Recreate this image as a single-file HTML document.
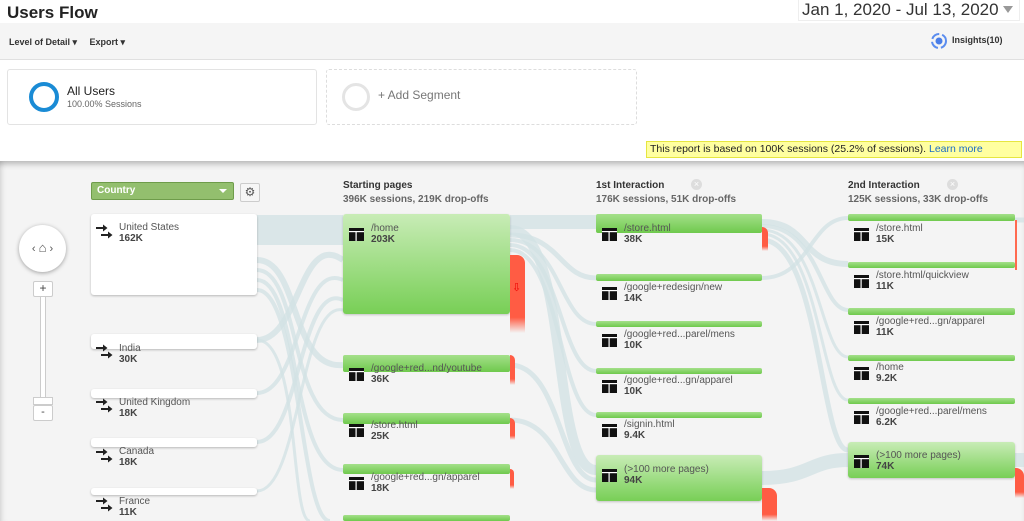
<!DOCTYPE html>
<html><head><meta charset="utf-8"><style>
*{margin:0;padding:0;box-sizing:border-box}
body{width:1024px;height:521px;overflow:hidden;background:#fff;font-family:"Liberation Sans",Arial,sans-serif;position:relative;color:#333}
.a{position:absolute}
.t{position:absolute;font-size:10px;color:#555;line-height:11px;white-space:nowrap}
.t b{display:block;color:#444}
.cb{position:absolute;background:#fff;border-radius:3px;box-shadow:0 1px 2px rgba(0,0,0,.25)}
.gn{position:absolute;background:linear-gradient(#c8ecb6,#78cf56);border-radius:3px;box-shadow:0 1px 2px rgba(0,0,0,.2)}
.gb{position:absolute;background:linear-gradient(#a4e08a,#6fc94d);border-radius:2px;height:7px}
.rd{position:absolute;background:linear-gradient(#ff5c44 80%,rgba(255,92,68,0));border-radius:0 8px 0 0}
.hd{position:absolute;font-size:10px;font-weight:bold;color:#333;line-height:14px}
.hd span{display:block;font-weight:bold;color:#666}
</style></head><body>
<div class="a" style="left:0;top:0;width:1024px;height:23px;background:#fff"></div>
<div class="a" style="left:7px;top:3px;font-size:17px;font-weight:bold;color:#222">Users Flow</div>
<div class="a" style="left:798px;top:0;width:222px;height:21px;border:1px solid #eee;border-top:0;background:#fff"></div>
<div class="a" style="left:802px;top:0;font-size:17px;color:#333">Jan 1, 2020 - Jul 13, 2020</div>
<div class="a" style="left:1003px;top:6px;width:0;height:0;border-left:5px solid transparent;border-right:5px solid transparent;border-top:7px solid #999"></div>
<div class="a" style="left:0;top:23px;width:1024px;height:37px;background:#f5f5f5;border-bottom:1px solid #e0e0e0"></div>
<div class="a" style="left:9px;top:37px;font-size:9px;color:#333;font-weight:600">Level of Detail ▾ &nbsp;&nbsp;&nbsp; Export ▾</div>
<svg class="a" style="left:929px;top:31px" width="20" height="20" viewBox="0 0 20 20"><circle cx="10" cy="10" r="7" fill="none" stroke="#5b8def" stroke-width="2" stroke-dasharray="9 3"/><circle cx="10" cy="10" r="3.5" fill="#4a7ee8"/></svg>
<div class="a" style="left:952px;top:35px;font-size:9px;font-weight:bold;color:#333">Insights(10)</div>
<div class="a" style="left:7px;top:69px;width:310px;height:56px;border:1px solid #e3e3e3;border-radius:3px;background:#fff"></div>
<div class="a" style="left:29px;top:82px;width:30px;height:30px;border:4px solid #1a8bd5;border-radius:50%"></div>
<div class="a" style="left:67px;top:84px;font-size:12px;color:#222">All Users</div>
<div class="a" style="left:67px;top:99px;font-size:9px;color:#666">100.00% Sessions</div>
<div class="a" style="left:326px;top:69px;width:311px;height:56px;border:1px dashed #ddd;border-radius:3px"></div>
<div class="a" style="left:342px;top:83px;width:28px;height:28px;border:3px solid #e4e4e4;border-radius:50%"></div>
<div class="a" style="left:378px;top:88px;font-size:12px;color:#777">+ Add Segment</div>
<div class="a" style="left:646px;top:141px;width:376px;height:17px;background:#ffffa0;border:1px solid #e6e640;font-size:10.5px;line-height:15px;padding-left:3px;color:#222">This report is based on 100K sessions (25.2% of sessions). <span style="color:#1a6cc4">Learn more</span></div>
<div class="a" style="left:0;top:161px;width:1024px;height:360px;background:#f4f4f4;box-shadow:inset 0 6px 6px -3px rgba(0,0,0,.25),inset 6px 0 6px -4px rgba(0,0,0,.1)"></div>

<svg class="a" style="left:0;top:161px" width="1024" height="360" viewBox="0 161 1024 360">
<g fill="none" stroke="#d2e2e4" stroke-opacity=".75">
<path d="M257 230 C300 230 300 230 343 230" stroke-width="30"/>
<path d="M257 260 C300 260 290 370 343 365" stroke-width="6"/>
<path d="M257 270 C300 270 290 420 343 420" stroke-width="4"/>
<path d="M257 280 C300 280 290 470 343 470" stroke-width="4"/>
<path d="M257 290 C300 290 300 521 330 521" stroke-width="4"/>
<path d="M257 340 C300 340 300 230 343 260" stroke-width="6"/>
<path d="M257 393 C300 393 300 260 343 280" stroke-width="4"/>
<path d="M257 442 C300 442 300 280 343 300" stroke-width="4"/>
<path d="M257 491 C300 491 300 300 343 310" stroke-width="3"/>
<path d="M257 340 C300 340 290 521 310 521" stroke-width="3"/>
<path d="M510 222 C550 222 550 222 596 222" stroke-width="14"/>
<path d="M510 235 C560 235 560 278 596 278" stroke-width="5"/>
<path d="M510 240 C560 240 560 324 596 324" stroke-width="4"/>
<path d="M510 245 C560 245 560 371 596 371" stroke-width="4"/>
<path d="M510 250 C560 250 560 415 596 415" stroke-width="4"/>
<path d="M510 230 C570 230 550 470 596 470" stroke-width="10"/>
<path d="M510 365 C560 365 560 480 596 480" stroke-width="5"/>
<path d="M510 420 C560 420 560 490 596 490" stroke-width="5"/>
<path d="M762 222 C810 222 800 264 848 264" stroke-width="6"/>
<path d="M762 226 C820 226 820 310 848 310" stroke-width="4"/>
<path d="M762 230 C820 230 820 357 848 357" stroke-width="3"/>
<path d="M762 234 C820 234 820 400 848 400" stroke-width="3"/>
<path d="M762 278 C810 278 810 218 848 218" stroke-width="4"/>
<path d="M762 240 C820 240 820 450 848 450" stroke-width="5"/>
<path d="M762 478 C810 478 810 460 848 460" stroke-width="14"/>
<path d="M1015 220 L1024 220" stroke-width="5"/>
<path d="M1015 460 L1024 460" stroke-width="14"/>
</g></svg>

<div class="a" style="left:91px;top:182px;width:143px;height:18px;background:#93bf6e;border:1px solid #6e9c4a;border-radius:2px;color:#fff;font-size:10px;font-weight:bold;line-height:16px;padding-left:5px">Country</div>
<div class="a" style="left:219px;top:189px;border-left:4px solid transparent;border-right:4px solid transparent;border-top:4px solid #fff"></div>
<div class="a" style="left:240px;top:183px;width:20px;height:19px;background:#f6f6f6;border:1px solid #ccc;border-radius:2px;font-size:12px;text-align:center;line-height:17px;color:#555">⚙</div>

<div class="a" style="left:19px;top:225px;width:47px;height:47px;border-radius:50%;background:#fff;box-shadow:0 1px 4px rgba(0,0,0,.35);font-size:11px;color:#555;text-align:center;line-height:45px">‹ <span style="font-size:13px">⌂</span> ›</div>
<div class="a" style="left:40px;top:290px;width:6px;height:120px;background:#fff;border:1px solid #ccc"></div>
<div class="a" style="left:33px;top:281px;width:20px;height:16px;background:#fff;border:1px solid #ccc;border-radius:2px;text-align:center;font-size:12px;line-height:13px;color:#444">+</div>
<div class="a" style="left:33px;top:397px;width:20px;height:8px;background:#fff;border:1px solid #ccc"></div>
<div class="a" style="left:33px;top:405px;width:20px;height:16px;background:#fff;border:1px solid #ccc;border-radius:2px;text-align:center;font-size:11px;line-height:13px;color:#444">-</div>

<div class="cb" style="left:91px;top:214px;width:166px;height:81px"></div>
<div class="cb" style="left:91px;top:334px;width:166px;height:15px"></div>
<div class="cb" style="left:91px;top:389px;width:166px;height:9px"></div>
<div class="cb" style="left:91px;top:438px;width:166px;height:9px"></div>
<div class="cb" style="left:91px;top:488px;width:166px;height:7px"></div>

<div class="hd" style="left:343px;top:179px">Starting pages<span>396K sessions, 219K drop-offs</span></div>
<div class="hd" style="left:596px;top:179px">1st Interaction<span>176K sessions, 51K drop-offs</span></div>
<div class="hd" style="left:848px;top:179px">2nd Interaction<span>125K sessions, 33K drop-offs</span></div>
<div class="a" style="left:691px;top:179px;width:11px;height:11px;border-radius:50%;background:#ddd;color:#fff;font-size:9px;line-height:11px;text-align:center">×</div>
<div class="a" style="left:947px;top:179px;width:11px;height:11px;border-radius:50%;background:#ddd;color:#fff;font-size:9px;line-height:11px;text-align:center">×</div>

<div class="gn" style="left:343px;top:214px;width:167px;height:100px"></div>
<div class="rd" style="left:510px;top:255px;width:15px;height:78px"></div>
<div class="a" style="left:512px;top:281px;color:#e00;font-size:11px">⇩</div>
<div class="gb" style="left:343px;top:355px;width:167px;height:17px"></div>
<div class="rd" style="left:510px;top:355px;width:5px;height:30px"></div>
<div class="gb" style="left:343px;top:413px;width:167px;height:11px"></div>
<div class="rd" style="left:510px;top:418px;width:5px;height:22px"></div>
<div class="gb" style="left:343px;top:464px;width:167px;height:10px"></div>
<div class="rd" style="left:510px;top:469px;width:4px;height:20px"></div>
<div class="gb" style="left:343px;top:515px;width:167px;height:6px"></div>

<div class="gb" style="left:596px;top:214px;width:166px;height:19px"></div>
<div class="rd" style="left:762px;top:227px;width:6px;height:24px"></div>
<div class="gb" style="left:596px;top:274px;width:166px"></div>
<div class="gb" style="left:596px;top:321px;width:166px;height:6px"></div>
<div class="gb" style="left:596px;top:368px;width:166px;height:6px"></div>
<div class="gb" style="left:596px;top:412px;width:166px;height:6px"></div>
<div class="gn" style="left:596px;top:455px;width:166px;height:46px"></div>
<div class="rd" style="left:762px;top:488px;width:15px;height:33px"></div>

<div class="gb" style="left:848px;top:214px;width:167px"></div>
<div class="gb" style="left:848px;top:262px;width:167px;height:6px"></div>
<div class="gb" style="left:848px;top:308px;width:167px"></div>
<div class="gb" style="left:848px;top:355px;width:167px;height:6px"></div>
<div class="gb" style="left:848px;top:398px;width:167px;height:6px"></div>
<div class="gn" style="left:848px;top:442px;width:167px;height:36px"></div>
<div class="rd" style="left:1015px;top:468px;width:9px;height:30px"></div>
<div class="a" style="left:1015px;top:220px;width:2px;height:50px;background:#ff6a50"></div>

<svg width="0" height="0" style="position:absolute"><defs>
<symbol id="pg" viewBox="0 0 15 13"><rect width="15" height="13" fill="#111"/><rect x="0" y="3" width="15" height="1.2" fill="#fff"/><rect x="6.5" y="4" width="1.2" height="9" fill="#fff"/></symbol>
<symbol id="ar" viewBox="0 0 17 17"><path d="M0 3h7V0.5l4.5 3.5L7 7.5V5H0z M5 10h7V7.5l4.5 3.5L12 14.5V12H5z" fill="#222"/></symbol>
</defs></svg>

<svg class="a" style="left:96px;top:224px" width="17" height="17"><use href="#ar"/></svg>
<div class="t" style="left:119px;top:222px">United States<b>162K</b></div>
<svg class="a" style="left:96px;top:344px" width="17" height="17"><use href="#ar"/></svg>
<div class="t" style="left:119px;top:343px">India<b>30K</b></div>
<svg class="a" style="left:96px;top:398px" width="17" height="17"><use href="#ar"/></svg>
<div class="t" style="left:119px;top:397px">United Kingdom<b>18K</b></div>
<svg class="a" style="left:96px;top:448px" width="17" height="17"><use href="#ar"/></svg>
<div class="t" style="left:119px;top:446px">Canada<b>18K</b></div>
<svg class="a" style="left:96px;top:497px" width="17" height="17"><use href="#ar"/></svg>
<div class="t" style="left:119px;top:496px">France<b>11K</b></div>

<svg class="a" style="left:349px;top:228px" width="15" height="13"><use href="#pg"/></svg>
<div class="t" style="left:371px;top:223px">/home<b>203K</b></div>
<svg class="a" style="left:349px;top:368px" width="15" height="13"><use href="#pg"/></svg>
<div class="t" style="left:371px;top:363px">/google+red...nd/youtube<b>36K</b></div>
<svg class="a" style="left:349px;top:424px" width="15" height="13"><use href="#pg"/></svg>
<div class="t" style="left:371px;top:420px">/store.html<b>25K</b></div>
<svg class="a" style="left:349px;top:477px" width="15" height="13"><use href="#pg"/></svg>
<div class="t" style="left:371px;top:472px">/google+red...gn/apparel<b>18K</b></div>

<svg class="a" style="left:602px;top:228px" width="15" height="13"><use href="#pg"/></svg>
<div class="t" style="left:624px;top:223px">/store.html<b>38K</b></div>
<svg class="a" style="left:602px;top:287px" width="15" height="13"><use href="#pg"/></svg>
<div class="t" style="left:624px;top:282px">/google+redesign/new<b>14K</b></div>
<svg class="a" style="left:602px;top:334px" width="15" height="13"><use href="#pg"/></svg>
<div class="t" style="left:624px;top:329px">/google+red...parel/mens<b>10K</b></div>
<svg class="a" style="left:602px;top:380px" width="15" height="13"><use href="#pg"/></svg>
<div class="t" style="left:624px;top:375px">/google+red...gn/apparel<b>10K</b></div>
<svg class="a" style="left:602px;top:424px" width="15" height="13"><use href="#pg"/></svg>
<div class="t" style="left:624px;top:419px">/signin.html<b>9.4K</b></div>
<svg class="a" style="left:602px;top:469px" width="15" height="13"><use href="#pg"/></svg>
<div class="t" style="left:624px;top:464px">(&gt;100 more pages)<b>94K</b></div>

<svg class="a" style="left:854px;top:228px" width="15" height="13"><use href="#pg"/></svg>
<div class="t" style="left:876px;top:223px">/store.html<b>15K</b></div>
<svg class="a" style="left:854px;top:275px" width="15" height="13"><use href="#pg"/></svg>
<div class="t" style="left:876px;top:270px">/store.html/quickview<b>11K</b></div>
<svg class="a" style="left:854px;top:321px" width="15" height="13"><use href="#pg"/></svg>
<div class="t" style="left:876px;top:316px">/google+red...gn/apparel<b>11K</b></div>
<svg class="a" style="left:854px;top:367px" width="15" height="13"><use href="#pg"/></svg>
<div class="t" style="left:876px;top:362px">/home<b>9.2K</b></div>
<svg class="a" style="left:854px;top:411px" width="15" height="13"><use href="#pg"/></svg>
<div class="t" style="left:876px;top:406px">/google+red...parel/mens<b>6.2K</b></div>
<svg class="a" style="left:854px;top:455px" width="15" height="13"><use href="#pg"/></svg>
<div class="t" style="left:876px;top:450px">(&gt;100 more pages)<b>74K</b></div>
</body></html>
